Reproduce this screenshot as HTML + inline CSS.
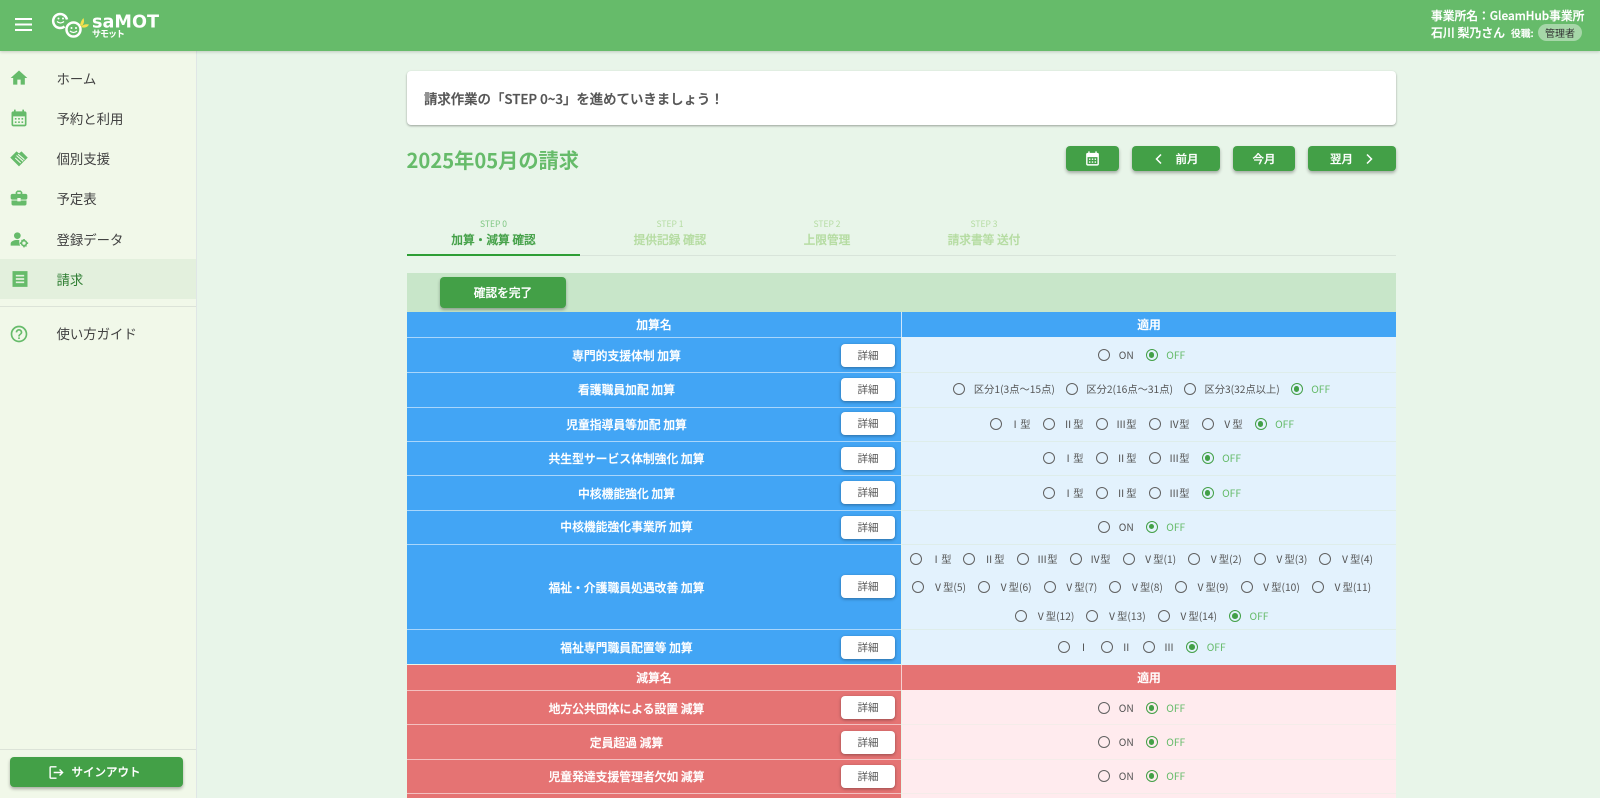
<!DOCTYPE html>
<html lang="ja"><head><meta charset="utf-8"><title>請求</title>
<style>
*{box-sizing:border-box}
html,body{margin:0;padding:0;width:1600px;height:798px;overflow:hidden;background:#e8f5e9}
body{position:relative;font-family:"Liberation Sans","Noto Sans CJK JP",sans-serif;color:#424242}
body,div,span{font-family:"Noto Sans CJK JP","Liberation Sans",sans-serif}
.a{position:absolute}
#hd{left:0;top:0;width:1600px;height:51px;background:#66bb6a;box-shadow:0 1px 3px rgba(0,0,0,.18);z-index:3}
#sb{left:0;top:51px;width:197px;height:747px;background:#f1f8e9;border-right:1px solid #dfe6e6}
.nv{position:absolute;left:56.500px;font-size:13.400px;line-height:20px;color:#424242;white-space:nowrap;z-index:2}
.ic{position:absolute;left:9px;width:20px;height:20px;fill:#66bb6a;z-index:2}
.btn{position:absolute;background:#43a047;color:#fff;border-radius:4px;font-size:11.500px;font-weight:500;-webkit-text-stroke:.2px currentColor;display:flex;align-items:center;justify-content:center;box-shadow:0 2px 3px rgba(0,0,0,.3);top:146px;height:25px}
.tab{position:absolute;text-align:center;white-space:nowrap;color:#b5dca2}
.tab small{position:absolute;left:0;right:0;top:218px;font-size:8.500px;line-height:12px}
.tab span{position:absolute;left:0;right:0;top:230.500px;font-size:11.700px;font-weight:500;-webkit-text-stroke:.25px currentColor;line-height:18px}
.l{position:absolute;left:407px;width:494px;color:#fff;font-size:11.800px;font-weight:500;-webkit-text-stroke:.25px #fff;display:flex;align-items:center;justify-content:center;padding-right:55px}
.l.hh{padding-right:0}
.blk{position:absolute;left:407px;width:494px}
.rt{position:absolute;left:902px;width:494px;padding-right:14.500px;display:flex;align-items:center;justify-content:center;white-space:nowrap;font-size:10.250px;color:#555}
.rt.h{color:#fff;font-size:11.800px;font-weight:500;-webkit-text-stroke:.25px #fff;padding-right:0}
.rt.k .o{margin:0 5.500px}
.d{position:absolute;left:841px;width:54px;height:23px;background:#fff;border-radius:4px;color:#555;font-size:10.500px;display:flex;align-items:center;justify-content:center;box-shadow:0 1px 3px rgba(0,0,0,.35)}
.o{display:inline-flex;align-items:center;margin:0 6px;line-height:14px}
.o i{display:block;width:12px;height:12px;border-radius:50%;border:1.200px solid #616161;margin-right:8.500px;flex:none}
.o.c{color:#66bb6a}
.o.c i{border-color:#43a047;position:relative}
.o.c i:after{content:"";position:absolute;left:2px;top:2px;width:5.600px;height:5.600px;border-radius:50%;background:#43a047}
.sep{position:absolute;height:1px;left:407px;width:494px;background:rgba(255,255,255,.55)}
.sp2{position:absolute;height:1px;left:902px;width:494px;background:rgba(220,235,225,.7)}
</style></head><body>

<div class="a" id="hd">
<svg class="a" style="left:15px;top:18px" width="17" height="13" viewBox="0 0 17 13"><path d="M0 0h17v2H0zM0 5.500h17v2H0zM0 11h17v2H0z" fill="#fff"/></svg>
<svg class="a" style="left:50px;top:8px" width="120" height="36" viewBox="0 0 120 36">
<g fill="none" stroke="#fff" stroke-width="2.500">
<path d="M14.500 18.500A7 7 0 1 1 17 11.500"/>
<circle cx="23.500" cy="21.500" r="7"/>
</g>
<circle cx="8.500" cy="10.500" r="1" fill="#fff"/><circle cx="13" cy="10.500" r="1" fill="#fff"/>
<path d="M7 13.500q3.500 3 7 0" fill="none" stroke="#fff" stroke-width="1.200"/>
<circle cx="21.500" cy="20" r="1" fill="#fff"/><circle cx="26" cy="20" r="1" fill="#fff"/>
<path d="M20 23q3.500 3 7 0" fill="none" stroke="#fff" stroke-width="1.200"/>
<path d="M30 18q.5-5 3.500-8 1.500 4-1 7.500z" fill="#f4e04d"/><path d="M31 19q3-3.500 8-2.500-2.500 4.500-8 2.500z" fill="#f4e04d"/>
<text x="42" y="19.500" font-family="'DejaVu Sans',sans-serif" font-weight="700" font-size="17.500" fill="#fff" textLength="67" lengthAdjust="spacingAndGlyphs">saMOT</text>
<text x="42" y="29" font-family="'Noto Sans CJK JP',sans-serif" font-weight="700" font-size="9" fill="#fff" textLength="33">サモット</text>
</svg>
<div class="a" style="left:1431px;top:7px;font-size:11.750px;font-weight:500;-webkit-text-stroke:.25px #fff;color:#fff;line-height:18px;white-space:nowrap">事業所名：GleamHub事業所</div>
<div class="a" style="left:1431px;top:24px;font-size:11.900px;font-weight:500;-webkit-text-stroke:.25px #fff;color:#fff;line-height:18px;white-space:nowrap">石川 梨乃さん</div>
<div class="a" style="left:1511px;top:25px;font-size:9.800px;font-weight:500;-webkit-text-stroke:.2px #fff;color:#fff;line-height:17px;white-space:nowrap">役職:</div>
<div class="a" style="left:1538px;top:24px;width:44px;height:17px;border-radius:9px;background:rgba(255,255,255,.42);font-size:10px;color:#333;display:flex;align-items:center;justify-content:center">管理者</div>
</div>

<div class="a" id="sb"></div>
<div class="a" style="left:0;top:259px;width:196px;height:40px;background:#e3f0dd"></div>
<div class="a" style="left:0;top:306px;width:196px;height:1px;background:#dce3d8"></div>
<div class="a" style="left:0;top:749px;width:196px;height:1px;background:#dce3d8"></div>

<svg class="ic" style="top:68px" viewBox="0 0 24 24"><path d="M10 20v-6h4v6h5v-8h3L12 3 2 12h3v8z"/></svg>
<svg class="ic" style="top:108px" viewBox="0 0 24 24"><path d="M19 4h-1V2h-2v2H8V2H6v2H5c-1.100 0-2 .9-2 2v14c0 1.100.9 2 2 2h14c1.100 0 2-.9 2-2V6c0-1.100-.9-2-2-2zm0 16H5V10h14v10zM7 12h2v2H7zm4 0h2v2h-2zm4 0h2v2h-2zM7 16h2v2H7zm4 0h2v2h-2zm4 0h2v2h-2z"/></svg>
<svg class="ic" style="top:148px" viewBox="0 0 24 24"><path d="M1.500 11.500 9 4l3 2.500L15 4l7.500 7.500-4 4-6.500 6.500-6-6z"/><path d="M9 9l8 7M7.500 12l6.500 6M11 7.500l7.500 6.500" stroke="#f1f8e9" stroke-width="1.300" fill="none"/></svg>
<svg class="ic" style="top:188px" viewBox="0 0 24 24"><path d="M10 16v-1H3.010L3 19c0 1.110.89 2 2 2h14c1.110 0 2-.89 2-2v-4h-7v1h-4zm10-9h-4.010V5l-2-2h-4l-2 2v2H4c-1.100 0-2 .9-2 2v3c0 1.110.89 2 2 2h6v-2h4v2h6c1.100 0 2-.9 2-2V9c0-1.100-.9-2-2-2zm-6 0h-4V5h4v2z"/></svg>
<svg class="ic" style="top:229px" viewBox="0 0 24 24"><circle cx="10" cy="8" r="4"/><path d="M2 20v-2.500c0-2.500 4-4.500 8-4.500 1 0 1.800.1 2.500.3-.6 2.500-.2 4.700 1 6.700z"/><circle cx="18" cy="17" r="3" fill="none" stroke="#66bb6a" stroke-width="2"/><path d="M17 12h2v2h-2zM17 20h2v2h-2zM13 16h2v2h-2zM21 16h2v2h-2zM14.500 13.500l1.400-1 1 1.500-1.400 1zM21.500 20.500l-1.400 1-1-1.500 1.400-1z"/></svg>
<svg class="ic" style="top:269px;left:9.500px" viewBox="0 0 24 24"><path fill-rule="evenodd" d="M3 2.500h18v19H3zM7 7v2h10V7zM7 11v2h10v-2zM7 15v2h10v-2z"/></svg>
<svg class="ic" style="top:324px" viewBox="0 0 24 24"><path d="M11 18h2v-2h-2v2zm1-16C6.480 2 2 6.480 2 12s4.480 10 10 10 10-4.480 10-10S17.520 2 12 2zm0 18c-4.410 0-8-3.590-8-8s3.590-8 8-8 8 3.590 8 8-3.590 8-8 8zm0-14c-2.210 0-4 1.790-4 4h2c0-1.100.9-2 2-2s2 .9 2 2c0 2-3 1.750-3 5h2c0-2.250 3-2.500 3-5 0-2.210-1.790-4-4-4z"/></svg>

<div class="nv" style="top:68px">ホーム</div>
<div class="nv" style="top:108px">予約と利用</div>
<div class="nv" style="top:148px">個別支援</div>
<div class="nv" style="top:188px">予定表</div>
<div class="nv" style="top:229px">登録データ</div>
<div class="nv" style="top:269px;color:#2e7d32">請求</div>
<div class="nv" style="top:323px">使い方ガイド</div>

<div class="btn" style="left:10px;top:757px;width:173px;height:30px;font-size:11.500px;padding-right:5px">
<svg width="17" height="17" viewBox="0 0 24 24" style="margin-right:7px"><path fill="#fff" d="M17 7l-1.410 1.410L18.170 11H8v2h10.170l-2.580 2.580L17 17l5-5zM4 5h8V3H4c-1.100 0-2 .9-2 2v14c0 1.100.9 2 2 2h8v-2H4V5z"/></svg>サインアウト</div>

<div class="a" style="left:407px;top:71px;width:989px;height:54px;background:#fff;border-radius:4px;box-shadow:0 1px 2px rgba(0,0,0,.35);font-size:13.400px;font-weight:500;-webkit-text-stroke:.3px #555;color:#555;display:flex;align-items:center;padding-left:17px">請求作業の「STEP 0~3」を進めていきましょう！</div>

<div class="a" style="left:406.500px;top:145px;font-size:20.200px;font-weight:700;color:#66bb6a;line-height:30px;white-space:nowrap">2025年05月の請求</div>

<div class="btn" style="left:1066px;width:53px"><svg width="17" height="17" viewBox="0 0 24 24"><path fill="#fff" d="M19 4h-1V2h-2v2H8V2H6v2H5c-1.100 0-2 .9-2 2v14c0 1.100.9 2 2 2h14c1.100 0 2-.9 2-2V6c0-1.100-.9-2-2-2zm0 16H5V10h14v10zM7 12h2v2H7zm4 0h2v2h-2zm4 0h2v2h-2zM7 16h2v2H7zm4 0h2v2h-2zm4 0h2v2h-2z"/></svg></div>
<div class="btn" style="left:1132px;width:88px"><svg width="10" height="12" viewBox="0 0 10 12" style="margin-right:12px"><path d="M7 1.500 2.500 6 7 10.500" fill="none" stroke="#fff" stroke-width="1.500"/></svg>前月</div>
<div class="btn" style="left:1233px;width:62px">今月</div>
<div class="btn" style="left:1308px;width:88px">翌月<svg width="10" height="12" viewBox="0 0 10 12" style="margin-left:11px"><path d="M3 1.500 7.500 6 3 10.500" fill="none" stroke="#fff" stroke-width="1.500"/></svg></div>

<div class="tab" style="left:407px;width:173px;color:#43a047;top:0"><small style="color:#81c784">STEP 0</small><span>加算・減算 確認</span></div>
<div class="tab" style="left:580px;width:180px;top:0"><small>STEP 1</small><span>提供記録 確認</span></div>
<div class="tab" style="left:747px;width:160px;top:0"><small>STEP 2</small><span>上限管理</span></div>
<div class="tab" style="left:904px;width:160px;top:0"><small>STEP 3</small><span>請求書等 送付</span></div>
<div class="a" style="left:407px;top:255px;width:989px;height:1px;background:#d8e4da"></div>
<div class="a" style="left:407px;top:254px;width:173px;height:2px;background:#2e9e35"></div>

<div class="a" style="left:407px;top:273px;width:989px;height:39px;background:#c8e6c9"></div>
<div class="btn" style="left:440px;top:277px;width:126px;height:31px;font-size:11.700px">確認を完了</div>

<!-- 加算 -->
<div class="blk" style="top:312px;height:352px;background:#42a5f5"></div>
<div class="l hh" style="top:312px;height:25px">加算名</div>
<div class="rt h" style="top:312px;height:25px;background:#42a5f5">適用</div>
<div class="a" style="left:901px;top:312px;width:1px;height:25px;background:#cfe6fb"></div>

<div class="l" style="top:338px;height:34px">専門的支援体制 加算</div>
<div class="l" style="top:372px;height:34px">看護職員加配 加算</div>
<div class="l" style="top:407px;height:34px">児童指導員等加配 加算</div>
<div class="l" style="top:441px;height:34px">共生型サービス体制強化 加算</div>
<div class="l" style="top:476px;height:34px">中核機能強化 加算</div>
<div class="l" style="top:510px;height:33px">中核機能強化事業所 加算</div>
<div class="l" style="top:545px;height:84px">福祉・介護職員処遇改善 加算</div>
<div class="l" style="top:630px;height:34px">福祉専門職員配置等 加算</div>
<div class="sep" style="top:337px"></div><div class="sep" style="top:372px"></div><div class="sep" style="top:407px"></div><div class="sep" style="top:441px"></div><div class="sep" style="top:475px"></div><div class="sep" style="top:510px"></div><div class="sep" style="top:544px"></div><div class="sep" style="top:629px"></div>

<div class="a" style="left:902px;top:337px;width:494px;height:328px;background:#e3f2fd"></div>
<div class="sp2" style="top:372px"></div><div class="sp2" style="top:407px"></div><div class="sp2" style="top:441px"></div><div class="sp2" style="top:475px"></div><div class="sp2" style="top:510px"></div><div class="sp2" style="top:544px"></div><div class="sp2" style="top:629px"></div>

<div class="rt" style="top:338px;height:34px"><span class="o"><i></i>ON</span><span class="o c"><i></i>OFF</span></div>
<div class="rt k" style="top:372px;height:34px"><span class="o"><i></i>区分1(3点〜15点)</span><span class="o"><i></i>区分2(16点〜31点)</span><span class="o"><i></i>区分3(32点以上)</span><span class="o c"><i></i>OFF</span></div>
<div class="rt" style="top:407px;height:34px"><span class="o"><i></i>Ⅰ型</span><span class="o"><i></i>Ⅱ型</span><span class="o"><i></i>Ⅲ型</span><span class="o"><i></i>Ⅳ型</span><span class="o"><i></i>Ⅴ型</span><span class="o c"><i></i>OFF</span></div>
<div class="rt" style="top:441px;height:34px"><span class="o"><i></i>Ⅰ型</span><span class="o"><i></i>Ⅱ型</span><span class="o"><i></i>Ⅲ型</span><span class="o c"><i></i>OFF</span></div>
<div class="rt" style="top:476px;height:34px"><span class="o"><i></i>Ⅰ型</span><span class="o"><i></i>Ⅱ型</span><span class="o"><i></i>Ⅲ型</span><span class="o c"><i></i>OFF</span></div>
<div class="rt" style="top:510px;height:33px"><span class="o"><i></i>ON</span><span class="o c"><i></i>OFF</span></div>
<div class="rt" style="top:545px;height:28px"><span class="o"><i></i>Ⅰ型</span><span class="o"><i></i>Ⅱ型</span><span class="o"><i></i>Ⅲ型</span><span class="o"><i></i>Ⅳ型</span><span class="o"><i></i>Ⅴ型(1)</span><span class="o"><i></i>Ⅴ型(2)</span><span class="o"><i></i>Ⅴ型(3)</span><span class="o"><i></i>Ⅴ型(4)</span></div>
<div class="rt" style="top:573px;height:28px"><span class="o"><i></i>Ⅴ型(5)</span><span class="o"><i></i>Ⅴ型(6)</span><span class="o"><i></i>Ⅴ型(7)</span><span class="o"><i></i>Ⅴ型(8)</span><span class="o"><i></i>Ⅴ型(9)</span><span class="o"><i></i>Ⅴ型(10)</span><span class="o"><i></i>Ⅴ型(11)</span></div>
<div class="rt" style="top:602px;height:28px"><span class="o"><i></i>Ⅴ型(12)</span><span class="o"><i></i>Ⅴ型(13)</span><span class="o"><i></i>Ⅴ型(14)</span><span class="o c"><i></i>OFF</span></div>
<div class="rt" style="top:630px;height:34px"><span class="o"><i></i>Ⅰ</span><span class="o"><i></i>Ⅱ</span><span class="o"><i></i>Ⅲ</span><span class="o c"><i></i>OFF</span></div>

<div class="d" style="top:344px">詳細</div><div class="d" style="top:378px">詳細</div><div class="d" style="top:412px">詳細</div><div class="d" style="top:447px">詳細</div><div class="d" style="top:481px">詳細</div><div class="d" style="top:516px">詳細</div><div class="d" style="top:575px">詳細</div><div class="d" style="top:636px">詳細</div>

<!-- 減算 -->
<div class="blk" style="top:665px;height:133px;background:#e57373"></div>
<div class="l hh" style="top:665px;height:25px">減算名</div>
<div class="rt h" style="top:665px;height:25px;background:#e57373">適用</div>
<div class="a" style="left:901px;top:665px;width:1px;height:25px;background:#f6d0d0"></div>

<div class="l" style="top:691px;height:34px">地方公共団体による設置 減算</div>
<div class="l" style="top:725px;height:34px">定員超過 減算</div>
<div class="l" style="top:760px;height:33px">児童発達支援管理者欠如 減算</div>
<div class="sep" style="top:690px"></div><div class="sep" style="top:724px"></div><div class="sep" style="top:759px"></div><div class="sep" style="top:793px"></div>

<div class="a" style="left:902px;top:690px;width:494px;height:108px;background:#ffebee"></div>
<div class="sp2" style="top:724px;background:#f4ece9"></div><div class="sp2" style="top:759px;background:#f4ece9"></div><div class="sp2" style="top:793px;background:#f4ece9"></div>
<div class="rt" style="top:691px;height:34px"><span class="o"><i></i>ON</span><span class="o c"><i></i>OFF</span></div>
<div class="rt" style="top:725px;height:34px"><span class="o"><i></i>ON</span><span class="o c"><i></i>OFF</span></div>
<div class="rt" style="top:759px;height:34px"><span class="o"><i></i>ON</span><span class="o c"><i></i>OFF</span></div>

<div class="d" style="top:696px">詳細</div><div class="d" style="top:731px">詳細</div><div class="d" style="top:765px">詳細</div>

</body></html>
